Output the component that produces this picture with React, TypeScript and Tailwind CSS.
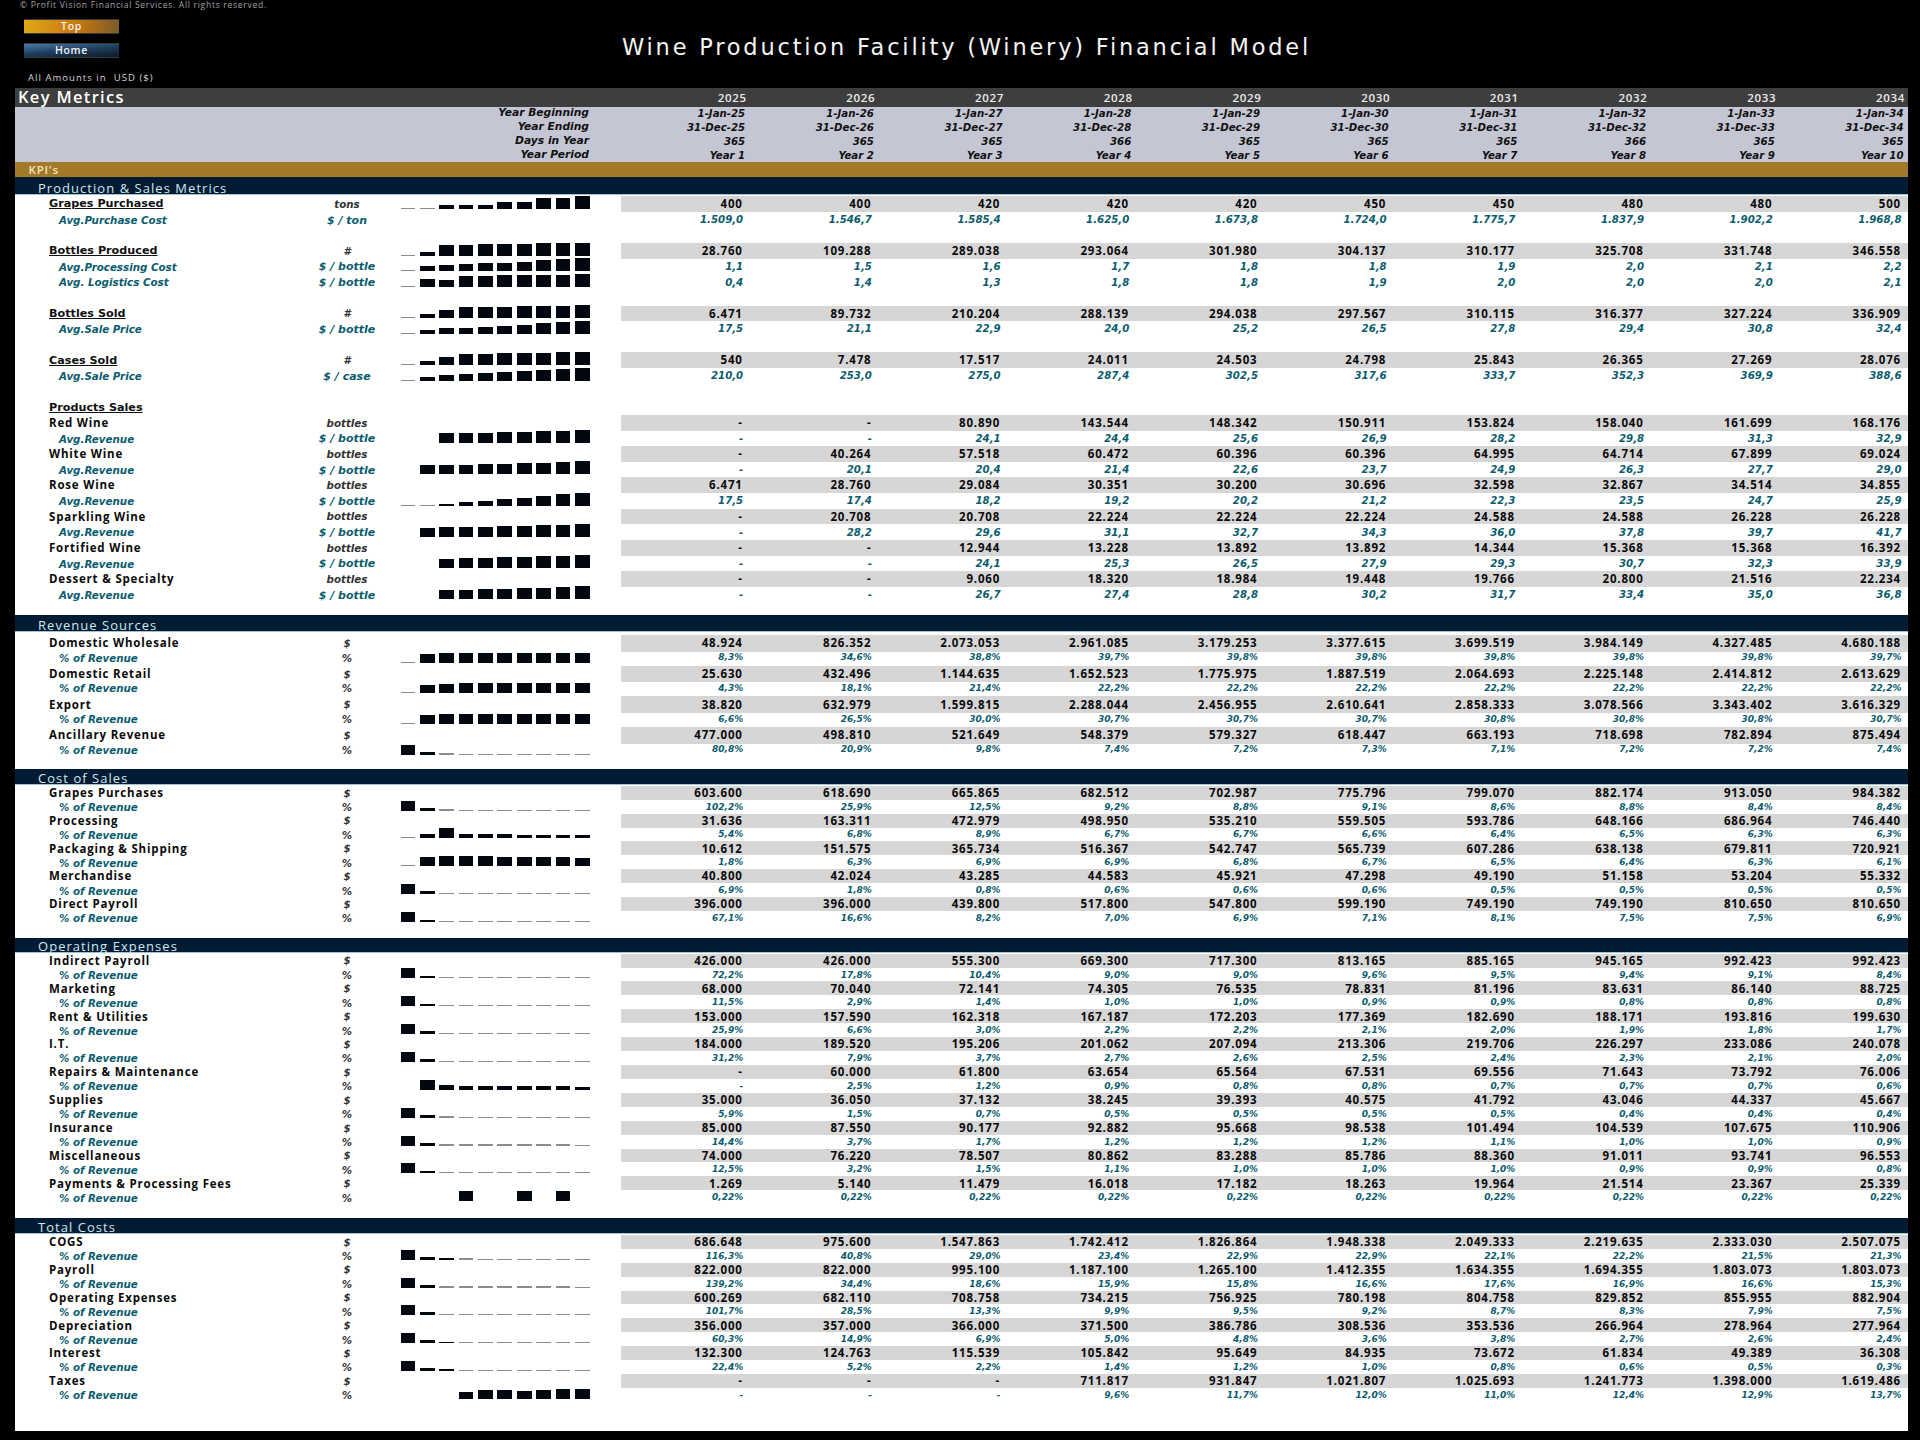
import React from 'react'

type RowDef = {
  label?: string
  unit?: string
  vals?: string
  kind?: 'head' | 'main' | 'sub' | 'title'
  spark?: boolean
  bars?: number[]
}

const wide = 'font-["Open_Sans",sans-serif]'
const slant = 'font-["DejaVu_Sans",sans-serif] font-bold italic'

const years = '2025 2026 2027 2028 2029 2030 2031 2032 2033 2034'.split(' ')
const headerRows: [string, string[]][] = [
  ['Year Beginning', years.map((y) => `1-Jan-${y.slice(2)}`)],
  ['Year Ending', years.map((y) => `31-Dec-${y.slice(2)}`)],
  ['Days in Year', '365 365 365 366 365 365 365 366 365 365'.split(' ')],
  ['Year Period', years.map((_, i) => `Year ${i + 1}`)],
]

const pct = (s: string) => s.split(' ').map((v) => (v === '-' ? v : v + '%')).join(' ')

const production: RowDef[] = [
  { label: 'Grapes Purchased', unit: 'tons', kind: 'head', spark: true, vals: '400 400 420 420 420 450 450 480 480 500' },
  { label: 'Avg.Purchase Cost', unit: '$ / ton', kind: 'sub', vals: '1.509,0 1.546,7 1.585,4 1.625,0 1.673,8 1.724,0 1.775,7 1.837,9 1.902,2 1.968,8' },
  {},
  { label: 'Bottles Produced', unit: '#', kind: 'head', spark: true, vals: '28.760 109.288 289.038 293.064 301.980 304.137 310.177 325.708 331.748 346.558' },
  { label: 'Avg.Processing Cost', unit: '$ / bottle', kind: 'sub', spark: true, vals: '1,1 1,5 1,6 1,7 1,8 1,8 1,9 2,0 2,1 2,2' },
  { label: 'Avg. Logistics Cost', unit: '$ / bottle', kind: 'sub', spark: true, vals: '0,4 1,4 1,3 1,8 1,8 1,9 2,0 2,0 2,0 2,1' },
  {},
  { label: 'Bottles Sold', unit: '#', kind: 'head', spark: true, vals: '6.471 89.732 210.204 288.139 294.038 297.567 310.115 316.377 327.224 336.909' },
  { label: 'Avg.Sale Price', unit: '$ / bottle', kind: 'sub', spark: true, vals: '17,5 21,1 22,9 24,0 25,2 26,5 27,8 29,4 30,8 32,4' },
  {},
  { label: 'Cases Sold', unit: '#', kind: 'head', spark: true, vals: '540 7.478 17.517 24.011 24.503 24.798 25.843 26.365 27.269 28.076' },
  { label: 'Avg.Sale Price', unit: '$ / case', kind: 'sub', spark: true, vals: '210,0 253,0 275,0 287,4 302,5 317,6 333,7 352,3 369,9 388,6' },
  {},
  { label: 'Products Sales', kind: 'title' },
  { label: 'Red Wine', unit: 'bottles', kind: 'main', vals: '- - 80.890 143.544 148.342 150.911 153.824 158.040 161.699 168.176' },
  { label: 'Avg.Revenue', unit: '$ / bottle', kind: 'sub', spark: true, vals: '- - 24,1 24,4 25,6 26,9 28,2 29,8 31,3 32,9' },
  { label: 'White Wine', unit: 'bottles', kind: 'main', vals: '- 40.264 57.518 60.472 60.396 60.396 64.995 64.714 67.899 69.024' },
  { label: 'Avg.Revenue', unit: '$ / bottle', kind: 'sub', spark: true, vals: '- 20,1 20,4 21,4 22,6 23,7 24,9 26,3 27,7 29,0' },
  { label: 'Rose Wine', unit: 'bottles', kind: 'main', vals: '6.471 28.760 29.084 30.351 30.200 30.696 32.598 32.867 34.514 34.855' },
  { label: 'Avg.Revenue', unit: '$ / bottle', kind: 'sub', spark: true, vals: '17,5 17,4 18,2 19,2 20,2 21,2 22,3 23,5 24,7 25,9' },
  { label: 'Sparkling Wine', unit: 'bottles', kind: 'main', vals: '- 20.708 20.708 22.224 22.224 22.224 24.588 24.588 26.228 26.228' },
  { label: 'Avg.Revenue', unit: '$ / bottle', kind: 'sub', spark: true, vals: '- 28,2 29,6 31,1 32,7 34,3 36,0 37,8 39,7 41,7' },
  { label: 'Fortified Wine', unit: 'bottles', kind: 'main', vals: '- - 12.944 13.228 13.892 13.892 14.344 15.368 15.368 16.392' },
  { label: 'Avg.Revenue', unit: '$ / bottle', kind: 'sub', spark: true, vals: '- - 24,1 25,3 26,5 27,9 29,3 30,7 32,3 33,9' },
  { label: 'Dessert & Specialty', unit: 'bottles', kind: 'main', vals: '- - 9.060 18.320 18.984 19.448 19.766 20.800 21.516 22.234' },
  { label: 'Avg.Revenue', unit: '$ / bottle', kind: 'sub', spark: true, vals: '- - 26,7 27,4 28,8 30,2 31,7 33,4 35,0 36,8' },
]

// every money row below is followed by its "% of Revenue" row
const pair = (label: string, vals: string, share: string, bars?: number[]): RowDef[] => [
  { label, unit: '$', kind: 'main', vals },
  { label: '% of Revenue', unit: '%', kind: 'sub', spark: true, vals: pct(share), bars },
]

const revenue = [
  ...pair('Domestic Wholesale', '48.924 826.352 2.073.053 2.961.085 3.179.253 3.377.615 3.699.519 3.984.149 4.327.485 4.680.188', '8,3 34,6 38,8 39,7 39,8 39,8 39,8 39,8 39,8 39,7'),
  ...pair('Domestic Retail', '25.630 432.496 1.144.635 1.652.523 1.775.975 1.887.519 2.064.693 2.225.148 2.414.812 2.613.629', '4,3 18,1 21,4 22,2 22,2 22,2 22,2 22,2 22,2 22,2'),
  ...pair('Export', '38.820 632.979 1.599.815 2.288.044 2.456.955 2.610.641 2.858.333 3.078.566 3.343.402 3.616.329', '6,6 26,5 30,0 30,7 30,7 30,7 30,8 30,8 30,8 30,7'),
  ...pair('Ancillary Revenue', '477.000 498.810 521.649 548.379 579.327 618.447 663.193 718.698 782.894 875.494', '80,8 20,9 9,8 7,4 7,2 7,3 7,1 7,2 7,2 7,4'),
]

const costOfSales = [
  ...pair('Grapes Purchases', '603.600 618.690 665.865 682.512 702.987 775.796 799.070 882.174 913.050 984.382', '102,2 25,9 12,5 9,2 8,8 9,1 8,6 8,8 8,4 8,4'),
  ...pair('Processing', '31.636 163.311 472.979 498.950 535.210 559.505 593.786 648.166 686.964 746.440', '5,4 6,8 8,9 6,7 6,7 6,6 6,4 6,5 6,3 6,3'),
  ...pair('Packaging & Shipping', '10.612 151.575 365.734 516.367 542.747 565.739 607.286 638.138 679.811 720.921', '1,8 6,3 6,9 6,9 6,8 6,7 6,5 6,4 6,3 6,1'),
  ...pair('Merchandise', '40.800 42.024 43.285 44.583 45.921 47.298 49.190 51.158 53.204 55.332', '6,9 1,8 0,8 0,6 0,6 0,6 0,5 0,5 0,5 0,5'),
  ...pair('Direct Payroll', '396.000 396.000 439.800 517.800 547.800 599.190 749.190 749.190 810.650 810.650', '67,1 16,6 8,2 7,0 6,9 7,1 8,1 7,5 7,5 6,9'),
]

const opex = [
  ...pair('Indirect Payroll', '426.000 426.000 555.300 669.300 717.300 813.165 885.165 945.165 992.423 992.423', '72,2 17,8 10,4 9,0 9,0 9,6 9,5 9,4 9,1 8,4'),
  ...pair('Marketing', '68.000 70.040 72.141 74.305 76.535 78.831 81.196 83.631 86.140 88.725', '11,5 2,9 1,4 1,0 1,0 0,9 0,9 0,8 0,8 0,8'),
  ...pair('Rent & Utilities', '153.000 157.590 162.318 167.187 172.203 177.369 182.690 188.171 193.816 199.630', '25,9 6,6 3,0 2,2 2,2 2,1 2,0 1,9 1,8 1,7'),
  ...pair('I.T.', '184.000 189.520 195.206 201.062 207.094 213.306 219.706 226.297 233.086 240.078', '31,2 7,9 3,7 2,7 2,6 2,5 2,4 2,3 2,1 2,0'),
  ...pair('Repairs & Maintenance', '- 60.000 61.800 63.654 65.564 67.531 69.556 71.643 73.792 76.006', '- 2,5 1,2 0,9 0,8 0,8 0,7 0,7 0,7 0,6'),
  ...pair('Supplies', '35.000 36.050 37.132 38.245 39.393 40.575 41.792 43.046 44.337 45.667', '5,9 1,5 0,7 0,5 0,5 0,5 0,5 0,4 0,4 0,4'),
  ...pair('Insurance', '85.000 87.550 90.177 92.882 95.668 98.538 101.494 104.539 107.675 110.906', '14,4 3,7 1,7 1,2 1,2 1,2 1,1 1,0 1,0 0,9'),
  ...pair('Miscellaneous', '74.000 76.220 78.507 80.862 83.288 85.786 88.360 91.011 93.741 96.553', '12,5 3,2 1,5 1,1 1,0 1,0 1,0 0,9 0,9 0,8'),
  ...pair('Payments & Processing Fees', '1.269 5.140 11.479 16.018 17.182 18.263 19.964 21.514 23.367 25.339', '0,22 0,22 0,22 0,22 0,22 0,22 0,22 0,22 0,22 0,22', [0, 0, 0, 10, 0, 0, 10, 0, 10, 0]),
]

const totals = [
  ...pair('COGS', '686.648 975.600 1.547.863 1.742.412 1.826.864 1.948.338 2.049.333 2.219.635 2.333.030 2.507.075', '116,3 40,8 29,0 23,4 22,9 22,9 22,1 22,2 21,5 21,3'),
  ...pair('Payroll', '822.000 822.000 995.100 1.187.100 1.265.100 1.412.355 1.634.355 1.694.355 1.803.073 1.803.073', '139,2 34,4 18,6 15,9 15,8 16,6 17,6 16,9 16,6 15,3'),
  ...pair('Operating Expenses', '600.269 682.110 708.758 734.215 756.925 780.198 804.758 829.852 855.955 882.904', '101,7 28,5 13,3 9,9 9,5 9,2 8,7 8,3 7,9 7,5'),
  ...pair('Depreciation', '356.000 357.000 366.000 371.500 386.786 308.536 353.536 266.964 278.964 277.964', '60,3 14,9 6,9 5,0 4,8 3,6 3,8 2,7 2,6 2,4'),
  ...pair('Interest', '132.300 124.763 115.539 105.842 95.649 84.935 73.672 61.834 49.389 36.308', '22,4 5,2 2,2 1,4 1,2 1,0 0,8 0,6 0,5 0,3'),
  ...pair('Taxes', '- - - 711.817 931.847 1.021.807 1.025.693 1.241.773 1.398.000 1.619.486', '- - - 9,6 11,7 12,0 11,0 12,4 12,9 13,7'),
]

const toNum = (s: string) => (s === '-' ? 0 : parseFloat(s.replace(/\./g, '').replace(',', '.').replace('%', '')))

function Spark({ vals, top, bars }: { vals: string[]; top: number; bars?: number[] }) {
  const nums = vals.map(toNum)
  const min = Math.min(...nums)
  const max = Math.max(...nums)
  const heights = bars ?? nums.map((n) => (n === 0 ? 0 : 1 + (top * (n - min)) / (max - min)))
  return (
    <div className="flex items-end gap-[4.6px] h-full pb-[3px]">
      {heights.map((h, i) => (
        <div
          key={i}
          className={`w-[14.8px] shrink-0 ${h < 1.6 ? 'bg-[#8c8c8c]' : 'bg-[#03070f]'}`}
          style={{ height: h }}
        />
      ))}
    </div>
  )
}

function Row({ row, rowClass, top, lift }: { row: RowDef; rowClass: string; top: number; lift?: boolean }) {
  const vals = row.vals?.split(' ') ?? []
  const sub = row.kind === 'sub'
  const shift = sub && lift ? 'pb-[1.5px]' : sub ? 'pt-[1px]' : ''
  return (
    <div className={`flex ${rowClass}`}>
      <div className={`w-[300px] flex items-center ${shift}`}>
        {row.kind === 'head' || row.kind === 'title' ? (
          <span className={`pl-[34px] text-[11.2px] leading-none underline text-[#111] font-["DejaVu_Sans",sans-serif] font-bold`}>{row.label}</span>
        ) : sub ? (
          <span className={`pl-[44px] text-[10.3px] leading-none text-[#0b5c6e] ${slant}`}>{row.label}</span>
        ) : (
          <span className={`pl-[34px] text-[11.5px] leading-none tracking-[0.07em] font-bold text-[#0a0a0a] ${wide}`}>{row.label}</span>
        )}
      </div>
      <div
        className={`w-[64px] flex items-center justify-center leading-none ${slant} ${shift} ${
          row.unit?.includes('/') ? 'text-[11px] text-[#0b5c6e]' : 'text-[10.3px] text-[#333]'
        }`}
      >
        {row.unit}
      </div>
      <div className="w-[242px] pl-[21.5px]">
        {row.spark && <Spark vals={vals} top={top} bars={row.bars} />}
      </div>
      <div className={`w-[1287px] grid grid-cols-10 ${vals.length && !sub ? 'bg-[#d7d6d7]' : ''}`}>
        {vals.map((v, i) =>
          sub ? (
            <div key={i} className={`flex items-center justify-end pr-[6.5px] leading-none text-[#0b5c6e] ${slant} ${shift} ${row.unit === '%' ? 'text-[9px]' : 'text-[10.2px]'}`}>
              {v}
            </div>
          ) : (
            <div key={i} className={`flex items-center justify-end pr-[7px] text-[11.5px] leading-none tracking-[0.07em] font-bold text-[#0a0a0a] ${wide}`}>
              {v}
            </div>
          ),
        )}
      </div>
    </div>
  )
}

function SectionBar({ title, className }: { title: string; className: string }) {
  return (
    <div className={`bg-[#031b33] border-b border-[#9fc4cf] flex items-end pl-[23px] ${className}`}>
      <span className={`text-[13px] leading-[11px] tracking-[0.08em] text-[#cdeaf0] ${wide}`}>{title}</span>
    </div>
  )
}

function NavButton({ label, className }: { label: string; className: string }) {
  return (
    <div className={`w-[95px] flex items-center justify-center text-[10.5px] leading-none tracking-[0.06em] font-semibold text-[#f3f3f3] border-y border-[#3a3a3a] ${wide} ${className}`}>
      {label}
    </div>
  )
}

export default function App() {
  return (
    <div className="w-full h-[1440px] bg-black overflow-hidden flex flex-col">
      {/* Top band */}
      <div className="h-[88px] flex shrink-0">
        <div className="w-[622px] shrink-0 flex flex-col">
          <div className={`h-[10px] pl-[20px] text-[8.5px] leading-[10px] tracking-[0.085em] text-[#a3a3a3] ${wide}`}>
            © Profit Vision Financial Services. All rights reserved.
          </div>
          <div className="ml-[24px] mt-[9px] flex flex-col gap-[9px]">
            <NavButton label="Top" className="h-[15px] bg-[linear-gradient(100deg,#e0a818_0%,#c8780e_55%,#7a5a2a_100%)]" />
            <NavButton label="Home" className="h-[15px] bg-[linear-gradient(175deg,#4a7ba6_0%,#1e3d5c_50%,#0c1a28_100%)]" />
          </div>
          <div className={`pl-[28px] mt-[15px] text-[9.5px] leading-[10px] tracking-[0.11em] text-[#d4d4d4] ${wide}`}>
            All Amounts in&nbsp; USD ($)
          </div>
        </div>
        <div className="pt-[34px] font-['DejaVu_Sans',sans-serif] text-[22.5px] leading-[27px] tracking-[2.8px] text-[#f4f4f4] whitespace-nowrap">
          Wine Production Facility (Winery) Financial Model
        </div>
      </div>

      {/* Sheet */}
      <div className="ml-[15px] w-[1893px] h-[1343px] bg-white flex flex-col">
        <div className="h-[18.7px] bg-[#3e3e3e] flex items-center shrink-0">
          <div className={`w-[606px] pl-[3px] text-[16.5px] leading-none tracking-[0.08em] font-semibold text-white ${wide}`}>Key Metrics</div>
          <div className="w-[1287px] grid grid-cols-10">
            {years.map((y) => (
              <div key={y} className={`text-right pr-[3px] text-[11.5px] leading-none tracking-[0.06em] font-semibold text-[#ececec] ${wide}`}>{y}</div>
            ))}
          </div>
        </div>
        <div className="h-[55.3px] bg-[#c5c6d3] flex flex-col shrink-0">
          {headerRows.map(([label, vals]) => (
            <div key={label} className="h-[14px] flex items-center leading-none text-[#111] shrink-0">
              <div className={`w-[574px] text-right text-[10.7px] ${slant}`}>{label}</div>
              <div className="w-[32px]" />
              <div className="w-[1287px] grid grid-cols-10">
                {vals.map((v, i) => (
                  <div key={i} className={`text-right pr-[4.5px] text-[10.2px] ${slant}`}>{v}</div>
                ))}
              </div>
            </div>
          ))}
        </div>
        <div className={`h-[15.5px] bg-[#a27a2a] flex items-center pl-[13.5px] text-[11.5px] leading-none tracking-[0.07em] font-semibold text-[#f5e6bd] shrink-0 ${wide}`}>
          KPI's
        </div>

        <SectionBar title="Production & Sales Metrics" className="h-[17.5px] shrink-0" />
        <div className="pt-[1.2px]">
          {production.map((r, i) => (
            <Row key={i} row={r} rowClass="h-[15.63px]" top={12} />
          ))}
        </div>

        <SectionBar title="Revenue Sources" className="h-[17.5px] mt-[12.4px] shrink-0" />
        <div className="mt-[2.5px]">
          {revenue.map((r, i) => (
            <Row key={i} row={r} rowClass={i % 2 === 0 ? 'h-[16.7px]' : 'h-[14px]'} top={9} lift />
          ))}
        </div>

        <SectionBar title="Cost of Sales" className="h-[16px] mt-[11.5px] shrink-0" />
        <div className="mt-[0.7px]">
          {costOfSales.map((r, i) => (
            <Row key={i} row={r} rowClass="h-[13.93px]" top={9} />
          ))}
        </div>

        <SectionBar title="Operating Expenses" className="h-[15.3px] mt-[12.7px] shrink-0" />
        <div className="mt-[0.7px]">
          {opex.map((r, i) => (
            <Row key={i} row={r} rowClass="h-[13.93px]" top={9} />
          ))}
        </div>

        <SectionBar title="Total Costs" className="h-[15.6px] mt-[14px] shrink-0" />
        <div className="mt-[1px]">
          {totals.map((r, i) => (
            <Row key={i} row={r} rowClass="h-[13.93px]" top={9} />
          ))}
        </div>
      </div>
    </div>
  )
}
